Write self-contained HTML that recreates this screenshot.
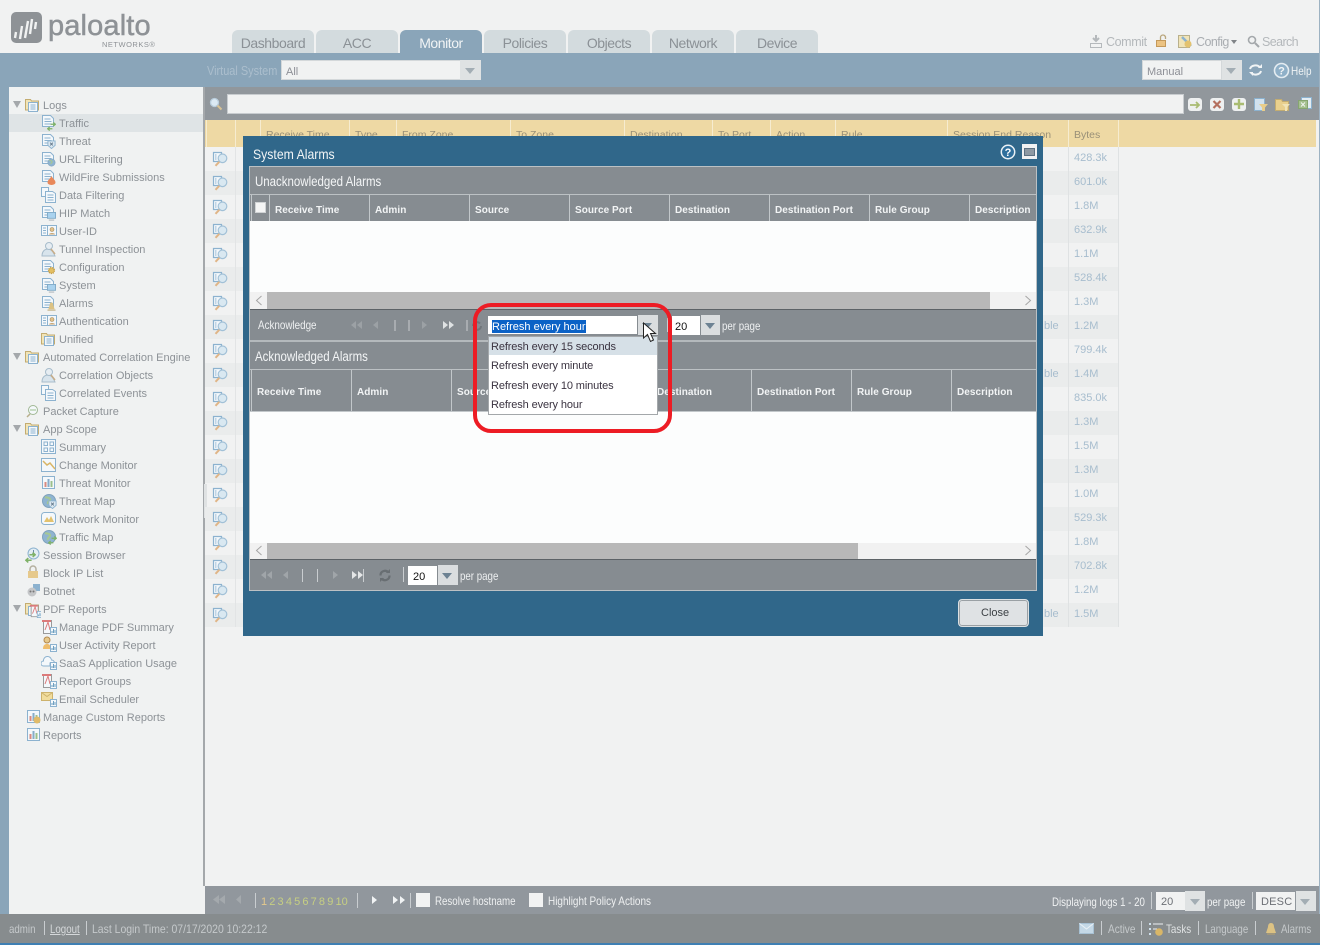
<!DOCTYPE html>
<html><head><meta charset="utf-8"><title>System Alarms</title>
<style>
html,body{margin:0;padding:0}
body{width:1320px;height:945px;overflow:hidden;position:relative;background:#f1f2f2;font:11px "Liberation Sans",sans-serif;color:#8a8f94}
div,span.a,svg.a{position:absolute}
.t{position:absolute;white-space:nowrap;line-height:14px;height:14px}
.c{transform:scaleX(.82);transform-origin:0 0}
.tab{position:absolute;top:30px;height:23px;width:82px;background:#d3dbde;border-radius:6px 6px 0 0;text-align:center;font-size:14px;line-height:27px;color:#8b9196;letter-spacing:-.45px}
.s{position:absolute;white-space:nowrap;line-height:14px;color:#8d9297}
.i{position:absolute;width:16px;height:16px}
.m{position:absolute;width:9px;height:9px}
.b{position:absolute;left:1074px;color:#a7bdce;line-height:14px}
.h{position:absolute;top:128px;color:#999078;line-height:14px;font-size:10.5px;white-space:nowrap}
.v{position:absolute;top:120px;height:27px;width:1px;background:#f6ecd0}
.ch{position:absolute;color:#f2f4f5;font-weight:bold;font-size:10px;line-height:14px;white-space:nowrap;letter-spacing:.05px}
.cv{position:absolute;width:1px;background:#c2c7ca}
.hd{position:absolute;color:#f3f5f6;font-size:13.5px;line-height:16px;white-space:nowrap;transform:scaleX(.85);transform-origin:0 0}
.o{position:absolute;left:491px;color:#3a3340;line-height:14px;letter-spacing:-.12px;white-space:nowrap}
.sep{position:absolute;width:1px;background:#c9cdd0}
</style></head><body>
<svg width="0" height="0" style="position:absolute"><defs>
<symbol id="doc" viewBox="0 0 16 16"><path d="M1.500 1.500h8l3 3v8h-11z" fill="#f4f8fb" stroke="#8cb2cf"/><path d="M3.500 5h6M3.500 7.500h7M3.500 10h7" stroke="#8cb2cf"/></symbol>
<symbol id="docs" viewBox="0 0 16 16"><path d="M.5.5h7v9h-7z" fill="#f4f8fb" stroke="#8cb2cf"/><path d="M4.500 4.500h7l3 2v9h-10z" fill="#f4f8fb" stroke="#8cb2cf"/><path d="M6.500 8h6M6.500 10.500h6M6.500 13h6" stroke="#8cb2cf"/></symbol>
<symbol id="fold" viewBox="0 0 16 16"><path d="M.500 2.500h5l1 1.500h7v9h-13z" fill="#f1e4b7" stroke="#c3ac70"/><path d="M3.500 5.500h9v9h-9z" fill="#f4f8fb" stroke="#8cb2cf"/><path d="M5.500 8h5M5.500 10h5M5.500 12h5" stroke="#8cb2cf"/></symbol>
<symbol id="glass" viewBox="0 0 16 16"><path d="M1.500 1.500h8v9h-8z" fill="#f4f8fb" stroke="#8cb2cf" stroke-width="1.200"/><path d="M3 4h1.500M3 6h1.500M3 8h1.500" stroke="#8cb2cf"/><circle cx="10.500" cy="7.300" r="4.300" fill="#d9e8f1" stroke="#a2c1d7" stroke-width="1.200"/><path d="M7.300 10.800 3.500 14.800" stroke="#e0b587" stroke-width="2"/></symbol>
<symbol id="chart" viewBox="0 0 16 16"><path d="M1.500 1.500h12v12h-12z" fill="#f4f8fb" stroke="#8cb2cf"/><path d="M4.500 12V7" stroke="#d98a80" stroke-width="2"/><path d="M7.500 12V4" stroke="#86acc9" stroke-width="2"/><path d="M10.500 12V6" stroke="#9cc08c" stroke-width="2"/></symbol>
<symbol id="pdf" viewBox="0 0 16 16"><path d="M2.500 1.500h8v13h-8z" fill="#f4f8fb" stroke="#9a9a9a"/><path d="M1 2h9" stroke="#dc7a7a" stroke-width="2"/><path d="M4 11 7 3l2 8" fill="none" stroke="#dc7a7a"/><path d="M9.500 8.500h6v7h-6z" fill="#f4f8fb" stroke="#8cb2cf"/><path d="M11 14v-2M12.500 14v-4M14 14v-3" stroke="#6e9fc0"/></symbol>
<symbol id="globe" viewBox="0 0 16 16"><circle cx="8" cy="8" r="6.500" fill="#8fb4d1" stroke="#7fa2bd"/><path d="M4 4c2 1 4 0 5 2s-3 2-2 5" fill="none" stroke="#a5c795" stroke-width="2.200"/></symbol>
<symbol id="grid" viewBox="0 0 16 16"><path d="M.500.500h14v14H.500z" fill="#f4f8fb" stroke="#8cb2cf"/><path d="M3 3h3.500v3.500H3zM9 3h3.500v3.500H9zM3 9h3.500v3.500H3zM9 9h3.500v3.500H9z" fill="none" stroke="#8cb2cf"/></symbol>
<symbol id="card" viewBox="0 0 16 16"><path d="M.500 3.500h15v10H.500z" fill="#f4f8fb" stroke="#8cb2cf"/><path d="M6.500 3.500v10" stroke="#8cb2cf"/><path d="M2 6h3M2 8.500h3M2 11h3" stroke="#8cb2cf"/><circle cx="11" cy="7.500" r="2" fill="#e0c08a" stroke="#a58a5c" stroke-width=".6"/><path d="M8 12.500c0-2 6-2 6 0z" fill="#c9a878"/></symbol>
<symbol id="person" viewBox="0 0 16 16"><path d="M1 15c0-5 3-7 6-7s5 2 7 7z" fill="#d8e4ec" stroke="#a7bccb"/><circle cx="8" cy="5" r="3.500" fill="#e6edf2" stroke="#a7bccb"/><path d="M10 8l4 5" stroke="#c8ad88" stroke-width="1.500"/></symbol>
<symbol id="gear" viewBox="0 0 10 10"><circle cx="5" cy="5" r="3.200" fill="#e3bf63" stroke="#c79e45" stroke-width="1.600" stroke-dasharray="1.400 .8"/></symbol>
<symbol id="mon" viewBox="0 0 10 10"><path d="M.500.500h9v6.500h-9z" fill="#a9d2ee" stroke="#7fa9c6"/><path d="M2 9h6" stroke="#c0c6ca" stroke-width="1.600"/></symbol>
<symbol id="bell" viewBox="0 0 10 10"><path d="M5 .500c1.500 0 2 1 2 3l1.500 4.500h-7L3 3.500c0-2 .5-3 2-3z" fill="#dcc283"/><path d="M.500 9h9" stroke="#b8a26c"/></symbol>
<symbol id="arr" viewBox="0 0 10 10"><path d="M4 2.500H9M7 .5l2.200 2-2.200 2" fill="none" stroke="#7fb268" stroke-width="1.400"/><path d="M6 7.500H1M3 5.500.8 7.500 3 9.500" fill="none" stroke="#7fb268" stroke-width="1.400"/></symbol>
<symbol id="xs" viewBox="0 0 10 10"><path d="M1 1h8v5l-4 3.500L1 6z" fill="#dbe8f1" stroke="#8cb2cf"/><path d="M3.500 3l3 3M6.500 3l-3 3" stroke="#61778a"/></symbol>
</defs></svg>

<!-- header -->
<svg class="a" style="left:11px;top:12px" width="31" height="31" viewBox="0 0 31 31"><rect width="31" height="31" rx="5" fill="#8e9296"/><path d="M4 26l1-6M9 27l2-13M14 26l3-17M19 22l2-15M24 17l1-7" stroke="#f1f2f2" stroke-width="2.400"/></svg>
<div class="t" style="left:48px;top:9px;height:36px;font-size:29px;line-height:34px;color:#8e9296;letter-spacing:.15px;-webkit-text-stroke:.5px #8e9296">paloalto</div>
<div class="t" style="left:102px;top:38px;font-size:7.500px;color:#8e9296;letter-spacing:.5px">NETWORKS®</div>
<div class="tab" style="left:232px">Dashboard</div>
<div class="tab" style="left:316px">ACC</div>
<div class="tab" style="left:400px;background:#8aa5b9;color:#f1f4f5">Monitor</div>
<div class="tab" style="left:484px">Policies</div>
<div class="tab" style="left:568px">Objects</div>
<div class="tab" style="left:652px">Network</div>
<div class="tab" style="left:736px">Device</div>
<svg class="a" style="left:1089px;top:34px" width="14" height="15" viewBox="0 0 14 15"><path d="M7 1v6M4 4l3 3 3-3" fill="none" stroke="#b5b9bc" stroke-width="2"/><path d="M1.500 9.500h11v4h-11z" fill="#f1f2f2" stroke="#b5b9bc"/></svg>
<div class="t" style="left:1106px;top:35px;font-size:12.500px;color:#b4b8bb;letter-spacing:-.4px">Commit</div>
<svg class="a" style="left:1155px;top:34px" width="14" height="14" viewBox="0 0 14 14"><path d="M5.500 6V3.500a2.500 2.500 0 0 1 5 0V5" fill="none" stroke="#b9a67c" stroke-width="1.300"/><path d="M1.500 6.500h9v6h-9z" fill="#ecc382" stroke="#c4995a"/></svg>
<svg class="a" style="left:1178px;top:34px" width="16" height="15" viewBox="0 0 16 15"><path d="M.500 1.500h11v12H.500z" fill="#f1e4b7" stroke="#b9b08c"/><path d="M4 3l9 9" stroke="#8cb2cf" stroke-width="2.500"/><circle cx="10" cy="10" r="3.500" fill="#e3c26e"/></svg>
<div class="t" style="left:1196px;top:35px;font-size:12.500px;color:#a9adb1;letter-spacing:-.55px">Config</div>
<div class="a" style="left:1231px;top:40px;border:3px solid transparent;border-top:4px solid #808488;border-left-width:3.500px;border-right-width:3.500px"></div>
<svg class="a" style="left:1247px;top:35px" width="13" height="13" viewBox="0 0 13 13"><circle cx="5" cy="5" r="3.500" fill="none" stroke="#a4a8ab" stroke-width="1.600"/><path d="M8 8l4 4" stroke="#a4a8ab" stroke-width="2"/></svg>
<div class="t" style="left:1262px;top:35px;font-size:12.500px;color:#b4b8bb;letter-spacing:-.6px">Search</div>

<!-- blue frame -->
<div style="left:0;top:53px;width:1320px;height:34px;background:#8aa5b9"></div>
<div style="left:0;top:87px;width:9px;height:827px;background:#8aa5b9"></div>
<div style="left:1319px;top:0;width:1px;height:945px;background:#9db2c2"></div>
<div class="t" style="left:207px;top:64px;font-size:12.500px;color:#abbecd;transform:scaleX(.875);transform-origin:0 0">Virtual System</div>
<div style="left:281px;top:60px;width:178px;height:18px;background:#f1f2f2;border:1px solid #d4d8da"></div>
<div class="t" style="left:286px;top:65px;color:#8d8f96">All</div>
<div style="left:460px;top:60px;width:21px;height:20px;background:#dfe2e3"></div>
<div style="left:465px;top:68px;border:5px solid transparent;border-top:6px solid #a3adb4;border-bottom:0"></div>
<div style="left:1142px;top:60px;width:78px;height:18px;background:#f1f2f2;border:1px solid #d4d8da"></div>
<div class="t" style="left:1147px;top:65px;color:#8d8f96">Manual</div>
<div style="left:1222px;top:60px;width:20px;height:20px;background:#dfe2e3"></div>
<div style="left:1226px;top:68px;border:5px solid transparent;border-top:6px solid #a3adb4;border-bottom:0"></div>
<svg class="a" style="left:1248px;top:63px" width="15" height="14" viewBox="0 0 15 14"><path d="M2 6a5.500 4.500 0 0 1 10-1.500M13 8a5.500 4.500 0 0 1-10 1.500" fill="none" stroke="#f1f4f5" stroke-width="2"/><path d="M10 5h4V1M1 9h4v4" fill="#f1f4f5"/></svg>
<svg class="a" style="left:1273px;top:62px" width="17" height="17" viewBox="0 0 17 17"><circle cx="8.500" cy="8.500" r="7" fill="#8fb0c8" stroke="#e4ecf1" stroke-width="1.600"/><text x="8.500" y="12.500" text-anchor="middle" font-size="11" font-weight="bold" fill="#f1f4f5" font-family="Liberation Sans">?</text></svg>
<div class="t" style="left:1291px;top:64px;font-size:12px;color:#eef2f4;transform:scaleX(.83);transform-origin:0 0">Help</div>

<!-- sidebar -->
<div style="left:9px;top:87px;width:194px;height:827px;background:#f0f2f2;border-radius:4px 0 0 0"></div>
<div style="left:203px;top:87px;width:2px;height:799px;background:#a4a8ab"></div>
<div style="left:9px;top:114px;width:194px;height:18px;background:#dfe4e6"></div>
<div style="left:204px;top:484px;width:3px;height:34px;background:#dfe2e3"></div>

<div style="left:13px;top:101px;border:4.500px solid transparent;border-top:7px solid #a4a8ab;border-bottom:0"></div>
<div style="left:13px;top:353px;border:4.500px solid transparent;border-top:7px solid #a4a8ab;border-bottom:0"></div>
<div style="left:13px;top:425px;border:4.500px solid transparent;border-top:7px solid #a4a8ab;border-bottom:0"></div>
<div style="left:13px;top:605px;border:4.500px solid transparent;border-top:7px solid #a4a8ab;border-bottom:0"></div>

<svg class="i" style="left:25px;top:97px"><use href="#fold"/></svg><div class="s" style="left:43px;top:99px">Logs</div>
<svg class="i" style="left:41px;top:114px"><use href="#doc"/></svg><svg class="m" style="left:47px;top:122px"><use href="#arr"/></svg><div class="s" style="left:59px;top:117px">Traffic</div>
<svg class="i" style="left:41px;top:133px"><use href="#doc"/></svg><svg class="m" style="left:47px;top:140px"><use href="#xs"/></svg><div class="s" style="left:59px;top:135px">Threat</div>
<svg class="i" style="left:41px;top:151px"><use href="#doc"/></svg><svg class="m" style="left:47px;top:158px"><use href="#globe"/></svg><div class="s" style="left:59px;top:153px">URL Filtering</div>
<svg class="i" style="left:41px;top:169px"><use href="#doc"/></svg><svg class="a" style="left:47px;top:176px" width="9" height="9" viewBox="0 0 9 9"><path d="M4.500 0C6 3 8.500 4 8.500 6.500a4 2.500 0 0 1-8 0C.5 4 3 3 4.500 0z" fill="#e8885a"/></svg><div class="s" style="left:59px;top:171px">WildFire Submissions</div>
<svg class="i" style="left:41px;top:187px"><use href="#docs"/></svg><div class="s" style="left:59px;top:189px">Data Filtering</div>
<svg class="i" style="left:41px;top:205px"><use href="#doc"/></svg><svg class="m" style="left:47px;top:212px"><use href="#mon"/></svg><div class="s" style="left:59px;top:207px">HIP Match</div>
<svg class="i" style="left:41px;top:222px"><use href="#card"/></svg><div class="s" style="left:59px;top:225px">User-ID</div>
<svg class="i" style="left:41px;top:241px"><use href="#person"/></svg><div class="s" style="left:59px;top:243px">Tunnel Inspection</div>
<svg class="i" style="left:41px;top:259px"><use href="#doc"/></svg><svg class="m" style="left:47px;top:266px"><use href="#gear"/></svg><div class="s" style="left:59px;top:261px">Configuration</div>
<svg class="i" style="left:41px;top:277px"><use href="#doc"/></svg><svg class="m" style="left:47px;top:284px"><use href="#mon"/></svg><div class="s" style="left:59px;top:279px">System</div>
<svg class="i" style="left:41px;top:295px"><use href="#doc"/></svg><svg class="m" style="left:47px;top:302px"><use href="#bell"/></svg><div class="s" style="left:59px;top:297px">Alarms</div>
<svg class="i" style="left:41px;top:312px"><use href="#card"/></svg><div class="s" style="left:59px;top:315px">Authentication</div>
<svg class="i" style="left:41px;top:331px"><use href="#fold"/></svg><div class="s" style="left:59px;top:333px">Unified</div>
<svg class="i" style="left:25px;top:349px"><use href="#fold"/></svg><div class="s" style="left:43px;top:351px">Automated Correlation Engine</div>
<svg class="i" style="left:41px;top:367px"><use href="#person"/></svg><div class="s" style="left:59px;top:369px">Correlation Objects</div>
<svg class="i" style="left:41px;top:385px"><use href="#docs"/></svg><div class="s" style="left:59px;top:387px">Correlated Events</div>
<svg class="a" style="left:25px;top:403px" width="16" height="16" viewBox="0 0 16 16"><circle cx="8" cy="7" r="4.500" fill="#f4f8fb" stroke="#a0b894"/><path d="M5 7h6" stroke="#9cc08c"/><path d="M5 11l-3 3" stroke="#b9b08c" stroke-width="1.500"/></svg><div class="s" style="left:43px;top:405px">Packet Capture</div>
<svg class="i" style="left:25px;top:421px"><use href="#fold"/></svg><div class="s" style="left:43px;top:423px">App Scope</div>
<svg class="i" style="left:41px;top:439px"><use href="#grid"/></svg><div class="s" style="left:59px;top:441px">Summary</div>
<svg class="a" style="left:41px;top:457px" width="16" height="16" viewBox="0 0 16 16"><path d="M.500 1.500h14v13H.500z" fill="#f4f8fb" stroke="#8cb2cf"/><path d="M2 4l4 4 3-2 5 6" fill="none" stroke="#d9b667" stroke-width="1.500"/></svg><div class="s" style="left:59px;top:459px">Change Monitor</div>
<svg class="i" style="left:41px;top:475px"><use href="#chart"/></svg><div class="s" style="left:59px;top:477px">Threat Monitor</div>
<svg class="i" style="left:41px;top:493px"><use href="#globe"/></svg><svg class="m" style="left:48px;top:500px"><use href="#xs"/></svg><div class="s" style="left:59px;top:495px">Threat Map</div>
<svg class="a" style="left:41px;top:511px" width="16" height="16" viewBox="0 0 16 16"><rect x=".5" y="1.500" width="14" height="12" rx="3" fill="#f4f8fb" stroke="#8cb2cf"/><path d="M3 11l3-5 2 3 2-4 3 6z" fill="#e3c26e"/></svg><div class="s" style="left:59px;top:513px">Network Monitor</div>
<svg class="i" style="left:41px;top:529px"><use href="#globe"/></svg><svg class="m" style="left:48px;top:536px"><use href="#arr"/></svg><div class="s" style="left:59px;top:531px">Traffic Map</div>
<svg class="a" style="left:27px;top:547px" width="13" height="13" viewBox="0 0 13 13"><circle cx="6.500" cy="6.500" r="5.500" fill="#e2edf4" stroke="#8cb2cf"/><path d="M6.500 3v3.500L4 8" fill="none" stroke="#6a8aa3"/></svg><svg class="m" style="left:25px;top:552px;width:11px;height:11px"><use href="#arr"/></svg><div class="s" style="left:43px;top:549px">Session Browser</div>
<svg class="a" style="left:27px;top:565px" width="12" height="14" viewBox="0 0 12 14"><path d="M3 6V4a3 3 0 0 1 6 0v2" fill="none" stroke="#b5b0a0" stroke-width="1.500"/><path d="M1 6h10v7H1z" fill="#e6c98c"/></svg><div class="s" style="left:43px;top:567px">Block IP List</div>
<svg class="a" style="left:26px;top:583px" width="15" height="15" viewBox="0 0 15 15"><path d="M7 1h7v7H7z" fill="#8cb2cf"/><circle cx="6" cy="9" r="4.500" fill="#c4c6c8"/><circle cx="4.500" cy="8.500" r="1" fill="#777"/><circle cx="7.500" cy="8.500" r="1" fill="#777"/></svg><div class="s" style="left:43px;top:585px">Botnet</div>
<svg class="i" style="left:25px;top:601px"><use href="#fold"/></svg><svg class="a" style="left:29px;top:604px" width="12" height="14"><use href="#pdf" width="14" height="14"/></svg><div class="s" style="left:43px;top:603px">PDF Reports</div>
<svg class="i" style="left:41px;top:619px"><use href="#pdf"/></svg><div class="s" style="left:59px;top:621px">Manage PDF Summary</div>
<svg class="a" style="left:41px;top:636px" width="16" height="16" viewBox="0 0 16 16"><circle cx="6" cy="4" r="3" fill="#e6c98c" stroke="#b58a4e"/><path d="M2 13c0-4 2-5 4-5s3 1 3 2v3z" fill="#eebd6d"/><path d="M9.500 8.500h6v7h-6z" fill="#f4f8fb" stroke="#8cb2cf"/><path d="M11 14v-2M12.500 14v-4M14 14v-3" stroke="#6e9fc0"/></svg><div class="s" style="left:59px;top:639px">User Activity Report</div>
<svg class="a" style="left:41px;top:654px" width="16" height="16" viewBox="0 0 16 16"><path d="M2.500 12a2.500 2.500 0 0 1 0-5 4 4 0 0 1 8-1 3 3 0 0 1 3 3H9v3z" fill="#f4f8fb" stroke="#8cb2cf"/><path d="M9.500 8.500h6v7h-6z" fill="#f4f8fb" stroke="#8cb2cf"/><path d="M11 14v-2M12.500 14v-4M14 14v-3" stroke="#6e9fc0"/></svg><div class="s" style="left:59px;top:657px">SaaS Application Usage</div>
<svg class="i" style="left:41px;top:673px"><use href="#pdf"/></svg><div class="s" style="left:59px;top:675px">Report Groups</div>
<svg class="a" style="left:41px;top:691px" width="16" height="16" viewBox="0 0 16 16"><path d="M.500 1.500h11v8H.500z" fill="#f1dc9c" stroke="#cdb26c"/><path d="M.500 1.500l5.500 4 5.500-4" fill="none" stroke="#cdb26c"/><path d="M9.500 8.500h6v7h-6z" fill="#f4f8fb" stroke="#8cb2cf"/><path d="M11 14v-2M12.500 14v-4M14 14v-3" stroke="#6e9fc0"/></svg><div class="s" style="left:59px;top:693px">Email Scheduler</div>
<svg class="i" style="left:26px;top:709px"><use href="#chart"/></svg><svg class="a" style="left:33px;top:716px" width="8" height="8"><circle cx="4" cy="4" r="3.500" fill="#e0bb6a"/></svg><div class="s" style="left:43px;top:711px">Manage Custom Reports</div>
<svg class="i" style="left:26px;top:727px"><use href="#chart"/></svg><div class="s" style="left:43px;top:729px">Reports</div>

<!-- filter bar -->
<div style="left:205px;top:87px;width:1114px;height:33px;background:#91979c"></div>
<svg class="a" style="left:209px;top:97px" width="14" height="14" viewBox="0 0 14 14"><circle cx="5.500" cy="5.500" r="4" fill="#dbe9f3" stroke="#b9cddc" stroke-width="1.300"/><path d="M8.500 8.500l4 4" stroke="#d8c294" stroke-width="2"/></svg>
<div style="left:227px;top:94px;width:955px;height:18px;background:#f1f2f2;border:1px solid #c8cccf"></div>
<div style="left:1188px;top:98px;width:14px;height:13px;border-radius:3px;background:#eef0f0"></div>
<svg class="a" style="left:1189px;top:100px" width="12" height="10" viewBox="0 0 12 10"><path d="M1 5h9M7 2l3 3-3 3" fill="none" stroke="#a9bc72" stroke-width="1.800"/></svg>
<div style="left:1210px;top:98px;width:14px;height:13px;border-radius:3px;background:#eef0f0"></div>
<svg class="a" style="left:1212px;top:100px" width="10" height="9" viewBox="0 0 10 9"><path d="M1.500 1l7 7M8.500 1l-7 7" stroke="#b4705f" stroke-width="2.200"/></svg>
<div style="left:1232px;top:98px;width:14px;height:13px;border-radius:3px;background:#eef0f0"></div>
<svg class="a" style="left:1234px;top:99px" width="10" height="10" viewBox="0 0 10 10"><path d="M5 0v10M0 5h10" stroke="#a9bc72" stroke-width="2.400"/></svg>
<svg class="a" style="left:1254px;top:97px" width="15" height="15" viewBox="0 0 15 15"><path d="M.500 1.500h10v12H.500z" fill="#d2e2ee" stroke="#8cb2cf"/><path d="M5 7h9l-3 3.500V14H8v-3.500z" fill="#e8cd8a"/></svg>
<svg class="a" style="left:1275px;top:97px" width="16" height="15" viewBox="0 0 16 15"><path d="M.500 2.500h6l1 2h6v9H.500z" fill="#e9d08d" stroke="#c3ac70"/><path d="M7 7h8l-3 3v4h-2v-4z" fill="#f1e4b7"/></svg>
<svg class="a" style="left:1298px;top:97px" width="15" height="15" viewBox="0 0 15 15"><path d="M3.500 .5h10v11h-10z" fill="#e4edf3" stroke="#8cb2cf"/><path d="M.500 3.500h9v8h-9z" fill="#a5c08f" stroke="#86a570"/><path d="M3 5.500l4 4M7 5.500l-4 4" stroke="#f1f4f1"/></svg>

<!-- grid header -->
<div style="left:205px;top:120px;width:1111px;height:27px;background:#eed9a4"></div>
<div class="v" style="left:206px"></div><div class="v" style="left:235px"></div><div class="v" style="left:260px"></div><div class="v" style="left:349px"></div><div class="v" style="left:396px"></div><div class="v" style="left:510px"></div><div class="v" style="left:624px"></div><div class="v" style="left:712px"></div><div class="v" style="left:770px"></div><div class="v" style="left:835px"></div><div class="v" style="left:947px"></div><div class="v" style="left:1068px"></div><div class="v" style="left:1118px"></div>
<div class="h" style="left:266px">Receive Time</div><div class="h" style="left:355px">Type</div><div class="h" style="left:402px">From Zone</div><div class="h" style="left:516px">To Zone</div><div class="h" style="left:630px">Destination</div><div class="h" style="left:718px">To Port</div><div class="h" style="left:776px">Action</div><div class="h" style="left:841px">Rule</div><div class="h" style="left:953px">Session End Reason</div><div class="h" style="left:1074px">Bytes</div>

<!-- grid rows stripes -->
<div style="left:205px;top:171px;width:913px;height:24px;background:#eaecec"></div>
<div style="left:205px;top:219px;width:913px;height:24px;background:#eaecec"></div>
<div style="left:205px;top:267px;width:913px;height:24px;background:#eaecec"></div>
<div style="left:205px;top:315px;width:913px;height:24px;background:#eaecec"></div>
<div style="left:205px;top:363px;width:913px;height:24px;background:#eaecec"></div>
<div style="left:205px;top:411px;width:913px;height:24px;background:#eaecec"></div>
<div style="left:205px;top:459px;width:913px;height:24px;background:#eaecec"></div>
<div style="left:205px;top:507px;width:913px;height:24px;background:#eaecec"></div>
<div style="left:205px;top:555px;width:913px;height:24px;background:#eaecec"></div>
<div style="left:205px;top:603px;width:913px;height:24px;background:#eaecec"></div>
<div style="left:1068px;top:147px;width:1px;height:480px;background:#dfe2e3"></div>
<div style="left:1118px;top:147px;width:1px;height:480px;background:#dfe2e3"></div>
<div style="left:235px;top:147px;width:1px;height:480px;background:#e2e4e5"></div>

<svg class="i" style="left:212px;top:151px"><use href="#glass"/></svg><svg class="i" style="left:212px;top:175px"><use href="#glass"/></svg><svg class="i" style="left:212px;top:199px"><use href="#glass"/></svg><svg class="i" style="left:212px;top:223px"><use href="#glass"/></svg><svg class="i" style="left:212px;top:247px"><use href="#glass"/></svg><svg class="i" style="left:212px;top:271px"><use href="#glass"/></svg><svg class="i" style="left:212px;top:295px"><use href="#glass"/></svg><svg class="i" style="left:212px;top:319px"><use href="#glass"/></svg><svg class="i" style="left:212px;top:343px"><use href="#glass"/></svg><svg class="i" style="left:212px;top:367px"><use href="#glass"/></svg><svg class="i" style="left:212px;top:391px"><use href="#glass"/></svg><svg class="i" style="left:212px;top:415px"><use href="#glass"/></svg><svg class="i" style="left:212px;top:439px"><use href="#glass"/></svg><svg class="i" style="left:212px;top:463px"><use href="#glass"/></svg><svg class="i" style="left:212px;top:487px"><use href="#glass"/></svg><svg class="i" style="left:212px;top:511px"><use href="#glass"/></svg><svg class="i" style="left:212px;top:535px"><use href="#glass"/></svg><svg class="i" style="left:212px;top:559px"><use href="#glass"/></svg><svg class="i" style="left:212px;top:583px"><use href="#glass"/></svg><svg class="i" style="left:212px;top:607px"><use href="#glass"/></svg>

<div class="b" style="top:151px">428.3k</div><div class="b" style="top:175px">601.0k</div><div class="b" style="top:199px">1.8M</div><div class="b" style="top:223px">632.9k</div><div class="b" style="top:247px">1.1M</div><div class="b" style="top:271px">528.4k</div><div class="b" style="top:295px">1.3M</div><div class="b" style="top:319px">1.2M</div><div class="b" style="top:343px">799.4k</div><div class="b" style="top:367px">1.4M</div><div class="b" style="top:391px">835.0k</div><div class="b" style="top:415px">1.3M</div><div class="b" style="top:439px">1.5M</div><div class="b" style="top:463px">1.3M</div><div class="b" style="top:487px">1.0M</div><div class="b" style="top:511px">529.3k</div><div class="b" style="top:535px">1.8M</div><div class="b" style="top:559px">702.8k</div><div class="b" style="top:583px">1.2M</div><div class="b" style="top:607px">1.5M</div>
<div class="b" style="left:1044px;top:319px">ble</div><div class="b" style="left:1044px;top:367px">ble</div><div class="b" style="left:1044px;top:607px">ble</div>

<!-- bottom bars -->
<div style="left:205px;top:886px;width:1114px;height:28px;background:#91979d"></div>
<div style="left:0;top:914px;width:1320px;height:29px;background:#878c8e"></div>
<div style="left:0;top:943px;width:1320px;height:2px;background:#3f7fb3"></div>
<svg class="a" style="left:212px;top:894px" width="60" height="12" viewBox="0 0 60 12"><path d="M7 1v9L1 5.500zM13 1v9L7 5.500zM29 1v9l-5-4.500z" fill="#a4a9ad"/></svg>
<div class="sep" style="left:255px;top:893px;height:15px"></div>
<div class="t" style="left:261px;top:895px;font-size:11px;word-spacing:-.9px;color:#c6cf82"><span style="color:#e5c98c">1</span> 2 3 4 5 6 7 8 9 10</div>
<div class="sep" style="left:357px;top:893px;height:15px"></div>
<svg class="a" style="left:370px;top:894px" width="36" height="12" viewBox="0 0 36 12"><path d="M2 2v8l5-4zM23 2v8l5-4zM30 2v8l5-4z" fill="#f1f3f4"/></svg>
<div class="sep" style="left:410px;top:893px;height:15px"></div>
<div style="left:416px;top:893px;width:14px;height:14px;background:#f1f2f2"></div>
<div class="t c" style="left:435px;top:894px;font-size:12px;color:#eef0f1;transform:scaleX(.81)">Resolve hostname</div>
<div style="left:529px;top:893px;width:14px;height:14px;background:#f1f2f2"></div>
<div class="t c" style="left:548px;top:894px;font-size:12px;color:#eef0f1;transform:scaleX(.83)">Highlight Policy Actions</div>
<div class="t c" style="left:1052px;top:895px;font-size:12px;color:#f0f2f3;transform:scaleX(.81)">Displaying logs 1 - 20</div>
<div class="sep" style="left:1151px;top:892px;height:17px"></div>
<div style="left:1156px;top:892px;width:29px;height:18px;background:#f1f2f2"></div>
<div class="t" style="left:1161px;top:895px;color:#6d7076">20</div>
<div style="left:1185px;top:891px;width:20px;height:20px;background:#dfe2e3"></div>
<div style="left:1190px;top:899px;border:5px solid transparent;border-top:6px solid #a3adb4;border-bottom:0"></div>
<div class="t c" style="left:1207px;top:895px;font-size:12px;color:#f0f2f3;transform:scaleX(.81)">per page</div>
<div class="sep" style="left:1252px;top:892px;height:17px"></div>
<div style="left:1256px;top:892px;width:39px;height:18px;background:#f1f2f2"></div>
<div class="t" style="left:1261px;top:895px;color:#6d7076;letter-spacing:.2px">DESC</div>
<div style="left:1296px;top:891px;width:20px;height:20px;background:#dfe2e3"></div>
<div style="left:1300px;top:899px;border:5px solid transparent;border-top:6px solid #a3adb4;border-bottom:0"></div>

<div class="t c" style="left:9px;top:922px;font-size:12px;color:#c5c9cb;transform:scaleX(.81)">admin</div>
<div class="sep" style="left:44px;top:921px;height:14px"></div>
<div class="t c" style="left:50px;top:922px;font-size:12px;color:#d5d8da;text-decoration:underline;transform:scaleX(.81)">Logout</div>
<div class="sep" style="left:86px;top:921px;height:14px"></div>
<div class="t c" style="left:92px;top:922px;font-size:12px;color:#c5c9cb;transform:scaleX(.87)">Last Login Time: 07/17/2020 10:22:12</div>
<svg class="a" style="left:1079px;top:923px" width="15" height="11" viewBox="0 0 15 11"><path d="M.500.500h14v10H.500z" fill="#c4d8e6" stroke="#a7c1d4"/><path d="M.500.500 7.500 6l7-5.500" fill="none" stroke="#eaf1f6"/></svg>
<div class="sep" style="left:1101px;top:921px;height:14px"></div>
<div class="t c" style="left:1108px;top:922px;font-size:12px;color:#c5c9cb;transform:scaleX(.84)">Active</div>
<div class="sep" style="left:1141px;top:921px;height:14px"></div>
<svg class="a" style="left:1148px;top:922px" width="16" height="15" viewBox="0 0 16 15"><path d="M1 1h2v2H1zM1 6h2v2H1zM1 11h2v2H1z" fill="#cfe0ec"/><path d="M5 2h10M5 7h4" stroke="#eef1f3"/><circle cx="11" cy="10" r="3.800" fill="#d9b667"/></svg>
<div class="t c" style="left:1166px;top:922px;font-size:12px;color:#dfe2e3">Tasks</div>
<div class="sep" style="left:1198px;top:921px;height:14px"></div>
<div class="t c" style="left:1205px;top:922px;font-size:12px;color:#c5c9cb;transform:scaleX(.81)">Language</div>
<div class="sep" style="left:1255px;top:921px;height:14px"></div>
<svg class="a" style="left:1264px;top:922px" width="14" height="14" viewBox="0 0 14 14"><path d="M7 1c2 0 3 1.500 3 4l2 6H2l2-6c0-2.500 1-4 3-4z" fill="#dcc283"/><path d="M3 12h8" stroke="#b8a26c"/></svg>
<div class="t c" style="left:1281px;top:922px;font-size:12px;color:#c5c9cb;transform:scaleX(.81)">Alarms</div>

<!-- modal -->
<div style="left:243px;top:136px;width:800px;height:500px;background:#30678a"></div>
<div class="t" style="left:253px;top:146px;height:16px;font-size:14px;line-height:16px;color:#f2f5f6;transform:scaleX(.875);transform-origin:0 0">System Alarms</div>
<svg class="a" style="left:1000px;top:144px" width="16" height="16" viewBox="0 0 16 16"><circle cx="8" cy="8" r="6.700" fill="#2f6f9c" stroke="#eaf1f5" stroke-width="1.500"/><text x="8" y="12" text-anchor="middle" font-size="11" font-weight="bold" fill="#fff" font-family="Liberation Sans">?</text></svg>
<div style="left:1022px;top:144px;width:15px;height:15px;background:#f0f2f3"></div>
<div style="left:1024px;top:148px;width:9px;height:6px;border:1px solid #5d7182;background:#8e9aa4"></div>

<div style="left:249px;top:166px;width:786px;height:423px;background:#868c91;border:1px solid #bcc1c4"></div>
<div class="hd" style="left:255px;top:174px">Unacknowledged Alarms</div>
<div style="left:250px;top:194px;width:786px;height:1px;background:#bcc1c4"></div>
<div class="cv" style="left:251px;top:195px;height:26px"></div><div class="cv" style="left:269px;top:195px;height:26px"></div><div class="cv" style="left:369px;top:195px;height:26px"></div><div class="cv" style="left:469px;top:195px;height:26px"></div><div class="cv" style="left:569px;top:195px;height:26px"></div><div class="cv" style="left:669px;top:195px;height:26px"></div><div class="cv" style="left:769px;top:195px;height:26px"></div><div class="cv" style="left:869px;top:195px;height:26px"></div><div class="cv" style="left:969px;top:195px;height:26px"></div>
<div style="left:255px;top:202px;width:9px;height:9px;background:#f4f5f5;border:1px solid #d0d3d5"></div>
<div class="ch" style="left:275px;top:204px">Receive Time</div><div class="ch" style="left:375px;top:204px">Admin</div><div class="ch" style="left:475px;top:204px">Source</div><div class="ch" style="left:575px;top:204px">Source Port</div><div class="ch" style="left:675px;top:204px">Destination</div><div class="ch" style="left:775px;top:204px">Destination Port</div><div class="ch" style="left:875px;top:204px">Rule Group</div><div class="ch" style="left:975px;top:204px">Description</div>
<div style="left:250px;top:221px;width:786px;height:71px;background:#fcfdfd"></div>
<div style="left:250px;top:292px;width:786px;height:17px;background:#b8b8b8"></div>
<div style="left:250px;top:292px;width:17px;height:17px;background:#f1f1f1"></div>
<div style="left:990px;top:292px;width:46px;height:17px;background:#f1f1f1"></div>
<svg class="a" style="left:255px;top:295px" width="8" height="11" viewBox="0 0 8 11"><path d="M6.500 1 1.500 5.500l5 4.500" fill="none" stroke="#a6a6a6"/></svg>
<svg class="a" style="left:1024px;top:295px" width="8" height="11" viewBox="0 0 8 11"><path d="M1.500 1l5 4.500-5 4.500" fill="none" stroke="#a6a6a6"/></svg>
<div style="left:250px;top:309px;width:786px;height:1px;background:#5c6266"></div>
<div class="t c" style="left:258px;top:318px;font-size:12px;color:#eef0f1">Acknowledge</div>
<svg class="a" style="left:350px;top:320px" width="120" height="11" viewBox="0 0 120 11"><path d="M6 1v8L1 5zM12 1v8L7 5zM28 1v8l-5-4zM72 1v8l5-4z" fill="#9ca1a5"/><path d="M93 1v8l5-4zM99 1v8l5-4z" fill="#dfe2e3"/><path d="M45 0v11M59 0v11M117 0v11" stroke="#c9cdd0"/></svg>
<svg class="a" style="left:471px;top:320px" width="12" height="12" viewBox="0 0 12 12"><path d="M2 6a4 4 0 0 1 7-2.500M10 6a4 4 0 0 1-7 2.500" fill="none" stroke="#70767a" stroke-width="2"/></svg>
<div style="left:250px;top:340px;width:786px;height:2px;background:#b4b9bc"></div>
<div class="hd" style="left:255px;top:349px">Acknowledged Alarms</div>
<div style="left:250px;top:369px;width:786px;height:1px;background:#bcc1c4"></div>
<div class="cv" style="left:251px;top:370px;height:41px"></div><div class="cv" style="left:351px;top:370px;height:41px"></div><div class="cv" style="left:451px;top:370px;height:41px"></div><div class="cv" style="left:751px;top:370px;height:41px"></div><div class="cv" style="left:851px;top:370px;height:41px"></div><div class="cv" style="left:951px;top:370px;height:41px"></div>
<div class="ch" style="left:257px;top:386px">Receive Time</div><div class="ch" style="left:357px;top:386px">Admin</div><div class="ch" style="left:457px;top:386px">Source</div><div class="ch" style="left:657px;top:386px">Destination</div><div class="ch" style="left:757px;top:386px">Destination Port</div><div class="ch" style="left:857px;top:386px">Rule Group</div><div class="ch" style="left:957px;top:386px">Description</div>
<div style="left:250px;top:411px;width:786px;height:1px;background:#c2c7ca"></div>
<div style="left:250px;top:412px;width:786px;height:131px;background:#fcfdfd"></div>
<div style="left:250px;top:543px;width:786px;height:16px;background:#f1f1f1"></div>
<div style="left:267px;top:543px;width:591px;height:16px;background:#b8b8b8"></div>
<svg class="a" style="left:255px;top:545px" width="8" height="11" viewBox="0 0 8 11"><path d="M6.500 1 1.500 5.500l5 4.500" fill="none" stroke="#a6a6a6"/></svg>
<svg class="a" style="left:1024px;top:545px" width="8" height="11" viewBox="0 0 8 11"><path d="M1.500 1l5 4.500-5 4.500" fill="none" stroke="#a6a6a6"/></svg>
<div style="left:250px;top:559px;width:786px;height:1px;background:#5c6266"></div>
<svg class="a" style="left:259px;top:569px" width="110" height="13" viewBox="0 0 110 13"><path d="M7 2v8L2 6zM13 2v8L8 6zM29 2v8l-5-4zM74 2v8l5-4z" fill="#a0a5a9"/><path d="M93 2v8l5-4zM99 2v8l5-4z" fill="#e4e6e7"/><path d="M43.500 0v13M58.500 0v13M104.500 0v13" stroke="#c9cdd0"/></svg>
<svg class="a" style="left:379px;top:569px" width="12" height="13" viewBox="0 0 12 13"><path d="M1.500 6.500a4.500 4.500 0 0 1 8-3M10.500 6.500a4.500 4.500 0 0 1-8 3" fill="none" stroke="#686e72" stroke-width="2.200"/><path d="M7 4h4V0M5 9H1v4" fill="#686e72"/></svg>
<div class="sep" style="left:403px;top:567px;height:15px"></div>
<div style="left:408px;top:566px;width:29px;height:19px;background:#fff"></div>
<div class="t" style="left:413px;top:570px;color:#111">20</div>
<div style="left:438px;top:565px;width:20px;height:20px;background:#dadddf"></div>
<div style="left:442px;top:573px;border:5.500px solid transparent;border-top:6px solid #6d8293;border-bottom:0"></div>
<div class="t c" style="left:460px;top:569px;font-size:12px;color:#eef0f1;transform:scaleX(.81)">per page</div>

<div style="left:958px;top:599px;width:69px;height:26px;border:1px solid #dde1e3;border-radius:4px;background:#dfe2e4;box-shadow:inset 0 0 0 1px #9aa0a4"></div>
<div class="t" style="left:981px;top:606px;color:#3c4145;font-size:11px">Close</div>

<!-- top toolbar combo -->
<div class="sep" style="left:667px;top:318px;height:14px"></div>
<div style="left:672px;top:316px;width:28px;height:19px;background:#fff"></div>
<div class="t" style="left:675px;top:320px;color:#111">20</div>
<div style="left:701px;top:315px;width:19px;height:20px;background:#dadddf"></div>
<div style="left:705px;top:323px;border:5.500px solid transparent;border-top:6px solid #6d8293;border-bottom:0"></div>
<div class="t c" style="left:722px;top:319px;font-size:12px;color:#eef0f1;transform:scaleX(.81)">per page</div>

<div style="left:488px;top:316px;width:149px;height:18px;background:#fff"></div>
<div class="t" style="left:492px;top:320px;background:#0b62c6;color:#fff;height:13px;line-height:14px;width:94px;overflow:hidden">Refresh every hour</div>
<div style="left:638px;top:315px;width:20px;height:20px;background:#dadddf"></div>
<div style="left:642px;top:323px;border:5.500px solid transparent;border-top:6px solid #6d8293;border-bottom:0"></div>
<div style="left:488px;top:336px;width:168px;height:77px;background:#fff;border:1px solid #a3a7aa"></div>
<div style="left:489px;top:337px;width:168px;height:18px;background:#d6e0e7"></div>
<div class="o" style="top:340px">Refresh every 15 seconds</div>
<div class="o" style="top:359px">Refresh every minute</div>
<div class="o" style="top:379px">Refresh every 10 minutes</div>
<div class="o" style="top:398px">Refresh every hour</div>
<svg class="a" style="left:642px;top:322px" width="16" height="22" viewBox="0 0 16 22"><path d="M1.500 1v15l4-3.500 3 7 3-1.500-3-6.500h5z" fill="#fff" stroke="#222"/></svg>
<div style="left:473px;top:303px;width:191px;height:122px;border:4px solid #ed1c24;border-radius:18px"></div>
</body></html>
